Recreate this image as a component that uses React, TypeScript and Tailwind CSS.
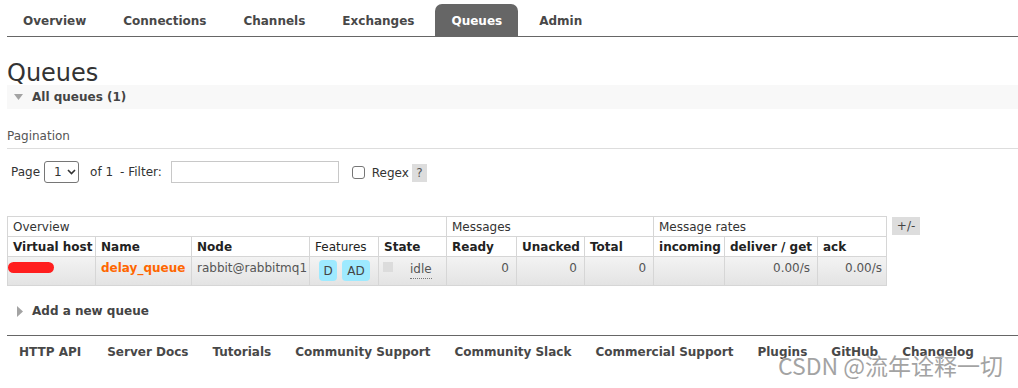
const tabs = ["Overview", "Connections", "Channels", "Exchanges", "Queues", "Admin"];

const footerLinks = [
  "HTTP API",
  "Server Docs",
  "Tutorials",
  "Community Support",
  "Community Slack",
  "Commercial Support",
  "Plugins",
  "GitHub",
  "Changelog",
];

const cell = "border border-[#d6d6d6] px-[5px] text-left align-middle";
const dataCell = "border border-[#d6d6d6] px-[5px] pt-[3px] pb-[4px] align-top text-[#555]";

function TriangleDown() {
  return (
    <svg width="9" height="6" viewBox="0 0 9 6" className="ml-[7px] mr-[9px]">
      <path d="M0 0 L9 0 L4.5 6 Z" fill="#a3a3a3" />
    </svg>
  );
}

function TriangleRight() {
  return (
    <svg width="6" height="11" viewBox="0 0 6 11" className="ml-[10px] mr-[9px]">
      <path d="M0 0 L6 5.5 L0 11 Z" fill="#a3a3a3" />
    </svg>
  );
}

export default function App() {
  return (
    <div
      className="relative min-h-[388px] bg-white pl-[7px] text-[12px] leading-[16px] text-[#333]"
      style={{ fontFamily: '"DejaVu Sans", Verdana, sans-serif' }}
    >
      {/* Top navigation */}
      <ul className="flex gap-[5px] border-b border-[#666] pt-[4px]">
        {tabs.map((tab) => (
          <li
            key={tab}
            className={
              tab === "Queues"
                ? "flex h-[32px] items-center rounded-t-[7px] bg-[#666] px-4 pt-[1px] font-bold text-white"
                : "flex h-[32px] items-center px-4 pt-[1px] font-bold text-[#484848]"
            }
          >
            {tab}
          </li>
        ))}
      </ul>

      <h1 className="mt-[24px] text-[24px] leading-[24px] font-normal text-[#333]">Queues</h1>

      {/* All queues section */}
      <div className="flex h-[24px] items-center bg-[#f8f8f8]">
        <TriangleDown />
        <span className="font-bold text-[#444]">All queues (1)</span>
      </div>

      <div className="mt-[19px] border-b border-[#ddd] pb-[4px] text-[#555]">Pagination</div>

      <div className="mt-[12px] flex h-[22px] items-center pl-[4px] text-[#333]">
        <span>Page</span>
        <div className="ml-[4px] flex h-[22px] w-[35px] items-center rounded-[3px] border border-[#767676] pl-[9px]">
          <span>1</span>
          <svg width="9" height="6" viewBox="0 0 9 6" className="ml-[5px]">
            <path d="M1 1 L4.5 4.5 L8 1" fill="none" stroke="#333" strokeWidth="1.6" />
          </svg>
        </div>
        <span className="ml-[11px]">of 1</span>
        <span className="ml-[7px]">- Filter:</span>
        <div className="ml-[9px] h-[22px] w-[168px] border border-[#c8c8c8]" />
        <div className="ml-[13px] h-[13px] w-[13px] rounded-[3px] border border-[#767676]" />
        <span className="ml-[7px] mt-[2px]">Regex</span>
        <span className="ml-[3px] mt-[2px] flex h-[18px] w-[15px] items-center justify-center bg-[#ddd] text-[#555]">
          ?
        </span>
      </div>

      {/* Queues table */}
      <div className="mt-[33px] flex items-start">
        <table className="w-[879px] table-fixed border-collapse">
          <colgroup>
            <col className="w-[88px]" />
            <col className="w-[96px]" />
            <col className="w-[118px]" />
            <col className="w-[69px]" />
            <col className="w-[68px]" />
            <col className="w-[70px]" />
            <col className="w-[68px]" />
            <col className="w-[69px]" />
            <col className="w-[71px]" />
            <col className="w-[93px]" />
            <col className="w-[69px]" />
          </colgroup>
          <thead>
            <tr className="h-[20px]">
              <th colSpan={5} className={`${cell} font-normal`}>Overview</th>
              <th colSpan={3} className={`${cell} font-normal`}>Messages</th>
              <th colSpan={3} className={`${cell} font-normal`}>Message rates</th>
            </tr>
            <tr className="h-[20px] text-[#222]">
              <th className={`${cell} font-bold whitespace-nowrap`}>Virtual host</th>
              <th className={`${cell} font-bold`}>Name</th>
              <th className={`${cell} font-bold`}>Node</th>
              <th className={`${cell} font-normal`}>Features</th>
              <th className={`${cell} font-bold`}>State</th>
              <th className={`${cell} font-bold`}>Ready</th>
              <th className={`${cell} font-bold`}>Unacked</th>
              <th className={`${cell} font-bold`}>Total</th>
              <th className={`${cell} font-bold`}>incoming</th>
              <th className={`${cell} font-bold whitespace-nowrap`}>deliver / get</th>
              <th className={`${cell} font-bold`}>ack</th>
            </tr>
          </thead>
          <tbody>
            <tr className="bg-linear-to-b from-[#f3f3f3] to-[#e3e3e3]">
              <td className={dataCell}>
                <span className="mt-[2px] -ml-[5px] block h-[11px] w-[46px] rounded-full bg-[#ff1e1e]" />
              </td>
              <td className={`${dataCell} font-bold whitespace-nowrap text-[#f60]`}>delay_queue</td>
              <td className={`${dataCell} whitespace-nowrap`}>rabbit@rabbitmq1</td>
              <td className={dataCell}>
                <div className="flex gap-[5px] pl-[4px]">
                  <span className="flex h-[21px] w-[18px] items-center justify-center rounded-[4px] bg-[#9eeaff] text-[#444]">
                    D
                  </span>
                  <span className="flex h-[21px] w-[28px] items-center justify-center rounded-[4px] bg-[#9eeaff] text-[#444]">
                    AD
                  </span>
                </div>
              </td>
              <td className={`${dataCell} pl-[4px]`}>
                <div className="flex items-start">
                  <span className="mt-[2px] h-[10px] w-[10px] bg-[#dcdcdc]" />
                  <span className="ml-[17px] border-b border-dotted border-[#777] leading-[18px]">idle</span>
                </div>
              </td>
              <td className={`${dataCell} text-right pr-[7px]`}>0</td>
              <td className={`${dataCell} text-right pr-[7px]`}>0</td>
              <td className={`${dataCell} text-right pr-[7px]`}>0</td>
              <td className={dataCell} />
              <td className={`${dataCell} text-right pr-[7px]`}>0.00/s</td>
              <td className={`${dataCell} text-right pr-[4px]`}>0.00/s</td>
            </tr>
          </tbody>
        </table>
        <span className="mt-[1px] ml-[5px] flex h-[18px] w-[28px] items-center justify-center bg-[#ddd] text-[#444]">
          +/-
        </span>
      </div>

      {/* Add a new queue */}
      <div className="mt-[17px] flex h-[16px] items-center">
        <TriangleRight />
        <span className="font-bold text-[#444]">Add a new queue</span>
      </div>

      {/* Footer */}
      <ul className="mt-[16px] flex border-t border-[#666] pt-[8px] pl-[12px]">
        {footerLinks.map((link) => (
          <li key={link} className="mr-[24px] font-bold text-[#484848] first:mr-[26px]">
            {link}
          </li>
        ))}
      </ul>

      {/* CSDN watermark */}
      <div
        className="absolute right-[15px] bottom-[9px] text-[23px] leading-[28px] text-[#a3a3a3]"
        style={{
          fontFamily: '"Noto Sans CJK SC", "Noto Sans", sans-serif',
          textShadow: "0 0 1px #fff, 0 0 1px #fff",
        }}
      >
        CSDN @流年诠释一切
      </div>
    </div>
  );
}
